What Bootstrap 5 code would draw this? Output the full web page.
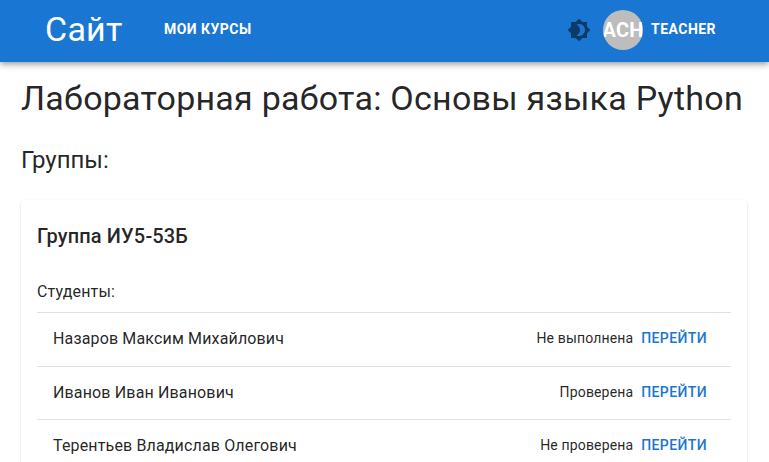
<!DOCTYPE html>
<html lang="ru"><head><meta charset="utf-8"><title>Сайт</title>
<link href="https://cdn.jsdelivr.net/npm/bootstrap@5.3.0/dist/css/bootstrap.min.css" rel="stylesheet">
<style>
body{font-family:Roboto,sans-serif;color:rgba(0,0,0,.87);background:#fff;font-size:16px;line-height:1.5;letter-spacing:.15px;height:100vh;overflow:hidden}
.topbar{height:62px;padding:0 53px 2px 45px;background:#1976d2;box-shadow:0 2px 4px -1px rgba(0,0,0,.2),0 4px 5px rgba(0,0,0,.14),0 1px 10px rgba(0,0,0,.12)}
.brand{font-size:34px;line-height:42px;letter-spacing:.25px;width:119px;padding-bottom:2px}
.toplink{font-size:14px;font-weight:700;letter-spacing:.46px;padding-bottom:2px}
.avatar{width:40px;height:40px;background:#bdbdbd;font-size:20px;font-weight:700;letter-spacing:.15px;margin:0 8px 0 12px}
main{padding:0 22px 0 21px}
.page-title{font-size:34px;line-height:42px;letter-spacing:.25px;font-weight:400;margin:15px 0 0}
.section-title{font-size:24px;line-height:32px;font-weight:400;letter-spacing:0;margin:25px 0 0}
.group{margin-top:24px;padding:20px 16px 0;border:0;border-radius:4px;box-shadow:0 2px 1px -1px rgba(0,0,0,.2),0 1px 1px rgba(0,0,0,.14),0 1px 3px rgba(0,0,0,.12);color:inherit}
.group-title{font-size:20px;line-height:32px;font-weight:500;letter-spacing:.15px;margin:0 0 28px}
.student{border-top:1px solid #e0e0e0;height:53.5px;padding:0 16px}
.status{font-size:14px;letter-spacing:.15px;padding-bottom:1px}
.go{font-size:14px;font-weight:500;letter-spacing:.4px;color:#1976d2;padding:0 8px 1px;text-decoration:none}
</style>
<script src="https://cdn.jsdelivr.net/npm/bootstrap@5.3.0/dist/js/bootstrap.bundle.min.js"></script>
</head><body>
<header class="topbar d-flex align-items-center text-white position-relative">
<div class="brand">Сайт</div><a class="toplink text-white text-decoration-none" href="#">МОИ КУРСЫ</a>
<svg class="ms-auto" width="24" height="24" viewBox="0 0 24 24" fill="#0d3b69"><path d="M20 8.69V4h-4.69L12 .69 8.69 4H4v4.69L.69 12 4 15.31V20h4.69L12 23.31 15.31 20H20v-4.69L23.31 12zM12 18c-.89 0-1.74-.2-2.5-.55C11.56 16.5 13 14.42 13 12s-1.44-4.5-3.5-5.45C10.26 6.2 11.11 6 12 6c3.31 0 6 2.69 6 6s-2.69 6-6 6"/></svg>
<div class="avatar rounded-circle d-flex align-items-center justify-content-center overflow-hidden"><span>ACH</span></div><span class="toplink">TEACHER</span>
</header>
<main>
<h1 class="page-title text-nowrap">Лабораторная работа: Основы языка Python</h1>
<h2 class="section-title">Группы:</h2>
<section class="card group">
<h3 class="group-title">Группа ИУ5-53Б</h3>
<div class="pb-2">Студенты:</div>
<div class="student d-flex align-items-center"><span class="me-auto">Назаров Максим Михайлович</span><span class="status">Не выполнена</span><a class="go" href="#">ПЕРЕЙТИ</a></div>
<div class="student d-flex align-items-center"><span class="me-auto">Иванов Иван Иванович</span><span class="status">Проверена</span><a class="go" href="#">ПЕРЕЙТИ</a></div>
<div class="student d-flex align-items-center"><span class="me-auto">Терентьев Владислав Олегович</span><span class="status">Не проверена</span><a class="go" href="#">ПЕРЕЙТИ</a></div>
</section>
</main>
</body></html>
